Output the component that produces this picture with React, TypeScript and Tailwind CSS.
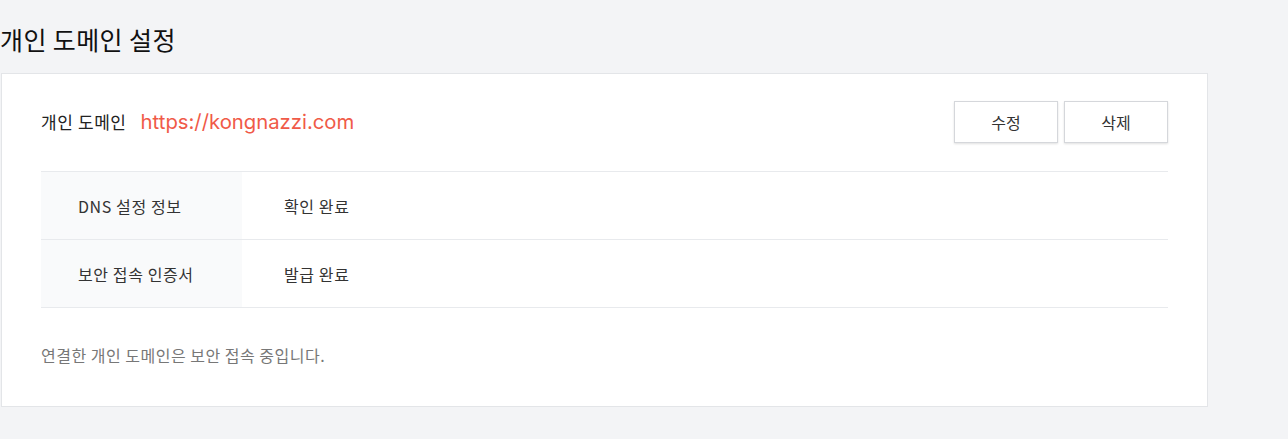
import React from "react";

const rows = [
  { label: "DNS 설정 정보", value: "확인 완료" },
  { label: "보안 접속 인증서", value: "발급 완료" },
];

export default function App() {
  return (
    <div
      className="min-h-[439px] bg-[#f3f4f6] text-[#222]"
      style={{ fontFamily: '"Noto Sans CJK KR", "Noto Sans", sans-serif' }}
    >
      <div className="w-[1208px] pt-[21px]">
        <h1 className="h-[37px] text-[25px] leading-[37px] tracking-[0.4px] font-normal text-[#111]">
          개인 도메인 설정
        </h1>
        <div className="mt-[15px] ml-px border border-[#e3e5e8] bg-white px-[39px] pt-[27px] pb-[40px]">
          {/* domain header */}
          <div className="flex items-center justify-between h-[42px]">
            <div className="flex items-center">
              <span className="text-[17px] tracking-[0.6px] text-[#222]">개인 도메인</span>
              <a
                href="#"
                className="ml-[14px] text-[20.3px] text-[#f05a48]"
                style={{ fontFamily: 'Inter, "Noto Sans", sans-serif' }}
              >
                https://kongnazzi.com
              </a>
            </div>
            <div className="flex gap-[6px]">
              <button className="w-[104px] h-[42px] border border-[#d5d7db] bg-white text-[16px] text-[#333] shadow-[0_1px_2px_rgba(0,0,0,0.12)]">
                수정
              </button>
              <button className="w-[104px] h-[42px] border border-[#d5d7db] bg-white text-[16px] text-[#333] shadow-[0_1px_2px_rgba(0,0,0,0.12)]">
                삭제
              </button>
            </div>
          </div>

          {/* status table */}
          <div className="mt-[28px] border-t border-[#e8eaed]">
            {rows.map((r) => (
              <div key={r.label} className="flex h-[68px] border-b border-[#e8eaed]">
                <div className="w-[201px] bg-[#f9fafb] pl-[37px] flex items-center text-[16px] tracking-[0.6px] text-[#333]">
                  {r.label}
                </div>
                <div className="pl-[42px] flex items-center text-[16px] tracking-[0.6px] text-[#333]">
                  {r.value}
                </div>
              </div>
            ))}
          </div>

          <p className="mt-[36px] text-[16px] leading-[22px] tracking-[0.5px] text-[#777]">
            연결한 개인 도메인은 보안 접속 중입니다.
          </p>
        </div>
      </div>
    </div>
  );
}
